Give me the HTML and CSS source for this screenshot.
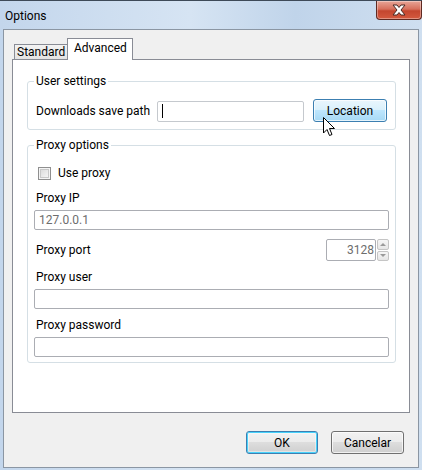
FILE: index.html
```html
<!DOCTYPE html>
<html lang="en">
<head>
    <meta charset="UTF-8">
    <title>Options</title>
    <link rel="stylesheet" href="styles.css">
</head>
<body>
    <div class="window">
        <div class="titlebar">
            <span class="title">Options</span>
            <div class="close-btn">
                <svg width="18" height="12" viewBox="0 0 18 12">
                    <path d="M3 1 H7 L9 3.5 L11 1 H15 L11 6 L15 11 H11 L9 8.5 L7 11 H3 L7 6 Z" fill="#fff" stroke="#4a2a24" stroke-width="1" stroke-linejoin="round"/>
                </svg>
            </div>
        </div>

        <div class="client">
            <div class="tabs">
                <div class="tab">Standard</div>
                <div class="tab active">Advanced</div>
            </div>

            <div class="tab-panel">
                <fieldset class="group group-user">
                    <legend>User settings</legend>
                    <div class="path-row">
                        <span class="path-label">Downloads save path</span>
                        <div class="textbox path-input"><span class="caret"></span></div>
                        <button class="btn btn-hover">Location</button>
                    </div>
                </fieldset>

                <fieldset class="group group-proxy">
                    <legend>Proxy options</legend>
                    <div class="check-row">
                        <span class="checkbox"></span>
                        <span>Use proxy</span>
                    </div>

                    <div class="field">
                        <div class="field-label">Proxy IP</div>
                        <div class="textbox muted">127.0.0.1</div>
                    </div>

                    <div class="field port-row">
                        <span>Proxy port</span>
                        <div class="spin">
                            <div class="textbox spin-input muted">3128</div>
                            <div class="spin-buttons">
                                <span class="spin-btn"><i class="arrow-up"></i></span>
                                <span class="spin-btn"><i class="arrow-down"></i></span>
                            </div>
                        </div>
                    </div>

                    <div class="field">
                        <div class="field-label">Proxy user</div>
                        <div class="textbox"></div>
                    </div>

                    <div class="field">
                        <div class="field-label">Proxy password</div>
                        <div class="textbox"></div>
                    </div>
                </fieldset>
            </div>

            <div class="dialog-buttons">
                <button class="btn btn-default">OK</button>
                <button class="btn">Cancelar</button>
            </div>
        </div>

        <!-- mouse pointer over the Location button -->
        <svg class="pointer" width="13" height="20" viewBox="0 0 13 20">
            <path d="M0.5 0.5 V16 L4 12.5 L6.5 18.5 L9 17.5 L6.5 11.5 H11.5 Z" fill="#fff" stroke="#000" stroke-width="1" stroke-linejoin="miter"/>
        </svg>
    </div>
</body>
</html>
```

FILE: styles.css
```css
* {
    margin: 0;
    padding: 0;
    box-sizing: border-box;
}

body {
    font-family: Roboto, "Noto Sans", sans-serif;
    font-size: 12px;
    line-height: 16px;
    color: #000;
    background-color: #fff;
}

.window {
    position: relative;
    width: 422px;
    height: 470px;
    display: flex;
    flex-direction: column;
    background: linear-gradient(90deg, #c3d6ec 0%, #d6e4f3 45%, #c0d4ea 70%, #cfdff0 100%);
    border-top: 1px solid #3e4a58;
}

.titlebar {
    height: 28px;
    display: flex;
    align-items: flex-start;
    padding-left: 5px;
}

.title {
    margin-top: 7px;
    font-size: 12px;
}

.close-btn {
    margin-left: auto;
    width: 46px;
    height: 19px;
    display: flex;
    align-items: center;
    justify-content: center;
    border: 1px solid #5f2a22;
    border-top: none;
    border-radius: 0 0 4px 4px;
    background: linear-gradient(#e8a597 0%, #d7705c 45%, #c4462f 55%, #d45a3f 100%);
    box-shadow: inset 0 0 0 1px rgba(255, 255, 255, 0.35);
}

.client {
    flex: 1;
    margin: 0 3px 2px 3px;
    border: 1px solid #8b96a3;
    background-color: #f0f0f0;
    padding: 8px 8px 0 8px;
    display: flex;
    flex-direction: column;
}

/* tabs */

.tabs {
    height: 21px;
    display: flex;
    align-items: flex-end;
    position: relative;
    z-index: 1;
}

.tab {
    height: 15px;
    line-height: 15px;
    border: 1px solid #898c95;
    border-bottom: none;
    background: linear-gradient(#f3f3f3, #e3e3e3);
    padding: 0 2px;
    white-space: nowrap;
    overflow: hidden;
}

.tab:first-child {
    margin-left: 2px;
    width: 55px;
}

.tab.active {
    width: 66px;
    height: 22px;
    margin-left: -2px;
    margin-bottom: -1px;
    background: #fff;
    line-height: 19px;
    padding: 0 6px;
}

.tab-panel {
    height: 354px;
    background-color: #fff;
    border: 1px solid #898c95;
    padding: 0 13px 0 14px;
}

/* group boxes */

.group {
    border: 1px solid #d5dfe5;
    border-radius: 3px;
    padding: 0 6px;
}

.group legend {
    padding: 0 2px;
    line-height: 16px;
}

.group-user {
    margin-top: 13px;
    padding-top: 10px;
    padding-bottom: 7px;
}

.group-proxy {
    margin-top: 7px;
    padding-top: 12px;
    padding-bottom: 5px;
}

.path-row {
    display: flex;
    align-items: center;
    height: 23px;
    padding-left: 2px;
}

.path-label {
    width: 121px;
}

.textbox {
    height: 20px;
    background-color: #fff;
    border: 1px solid #abadb3;
    border-radius: 2px;
    padding: 0 4px;
    display: flex;
    align-items: center;
}

.path-input {
    width: 147px;
    height: 21px;
    margin-right: 9px;
    margin-top: 1px;
    border-color: #c5c9ce;
}

.caret {
    width: 1px;
    height: 14px;
    background-color: #000;
}

.muted {
    color: #6d6d6d;
}

.check-row {
    display: flex;
    align-items: center;
    height: 16px;
    padding-left: 4px;
    gap: 7px;
}

.checkbox {
    width: 13px;
    height: 13px;
    border: 1px solid #8f8f8f;
    background: linear-gradient(135deg, #d5d5d5, #fbfbfb);
    box-shadow: inset 0 0 0 1px #f4f4f4, inset 0 0 0 2px #c8c8c8;
}

.field {
    margin-top: 8px;
    padding-left: 2px;
}

.check-row + .field {
    margin-top: 9px;
}

.field-label {
    margin-bottom: 4px;
}

.field .textbox {
    margin-left: -2px;
}

.port-row {
    display: flex;
    align-items: center;
    height: 22px;
    margin-top: 9px;
}

.spin {
    margin-left: auto;
    display: flex;
    height: 22px;
}

.spin .spin-input {
    width: 50px;
    height: 22px;
    margin-left: 0;
    justify-content: flex-end;
    padding-right: 1px;
}

.spin-buttons {
    width: 12px;
    display: flex;
    flex-direction: column;
    gap: 1px;
    margin-left: 1px;
}

.spin-btn {
    flex: 1;
    border: 1px solid #c5c5c5;
    border-radius: 2px;
    background: linear-gradient(#f6f6f6, #e6e6e6);
    display: flex;
    align-items: center;
    justify-content: center;
}

.arrow-up,
.arrow-down {
    width: 0;
    height: 0;
    border-left: 3px solid transparent;
    border-right: 3px solid transparent;
}

.arrow-up {
    border-bottom: 3px solid #9a9a9a;
}

.arrow-down {
    border-top: 3px solid #9a9a9a;
}

/* buttons */

.btn {
    font-family: inherit;
    font-size: 12px;
    color: #000;
    height: 23px;
    width: 72px;
    border: 1px solid #707070;
    border-radius: 3px;
    background: linear-gradient(#f2f2f2 0%, #ebebeb 49%, #dddddd 50%, #cfcfcf 100%);
    box-shadow: inset 0 0 0 1px rgba(255, 255, 255, 0.7);
}

.btn-hover {
    width: 74px;
    border-color: #3c7fb1;
    background: linear-gradient(#eaf6fd 0%, #d9f0fc 49%, #bee6fd 50%, #a7d9f5 100%);
}

.btn-default {
    border-color: #3c7fb1;
    box-shadow: inset 0 0 0 1px #48d2fb, inset 0 0 0 2px rgba(255, 255, 255, 0.4);
}

.dialog-buttons {
    display: flex;
    justify-content: flex-end;
    gap: 13px;
    margin-top: 18px;
    padding-right: 6px;
}

.dialog-buttons .btn:last-child {
    width: 73px;
}

.pointer {
    position: absolute;
    left: 323px;
    top: 116px;
}
```
